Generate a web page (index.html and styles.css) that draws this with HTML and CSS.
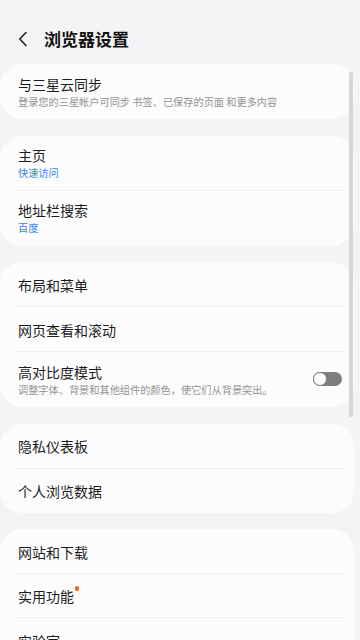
FILE: index.html
```html
<!DOCTYPE html>
<html lang="zh-CN">
<head>
<meta charset="utf-8">
<title>浏览器设置</title>
<link rel="stylesheet" href="styles.css">
</head>
<body>
<div class="screen">
  <header class="header">
    <svg class="back" width="12" height="16" viewBox="0 0 12 16"><path d="M9 1.5 L2.8 8 L9 14.5" fill="none" stroke="#222" stroke-width="1.6" stroke-linecap="round" stroke-linejoin="round"/></svg>
    <h1 class="title">浏览器设置</h1>
  </header>
  <main class="list">
    <section class="card">
      <div class="row two">
        <div class="label">与三星云同步</div>
        <div class="sub">登录您的三星帐户可同步 书签、已保存的页面 和更多内容</div>
      </div>
    </section>
    <section class="card">
      <div class="row two divided">
        <div class="label">主页</div>
        <div class="sub blue">快速访问</div>
      </div>
      <div class="row two">
        <div class="label">地址栏搜索</div>
        <div class="sub blue">百度</div>
      </div>
    </section>
    <section class="card">
      <div class="row one divided"><div class="label">布局和菜单</div></div>
      <div class="row one divided"><div class="label">网页查看和滚动</div></div>
      <div class="row two toggle-row">
        <div class="text">
          <div class="label">高对比度模式</div>
          <div class="sub">调整字体、背景和其他组件的颜色，使它们从背景突出。</div>
        </div>
        <div class="switch"><div class="knob"></div></div>
      </div>
    </section>
    <section class="card">
      <div class="row one divided"><div class="label">隐私仪表板</div></div>
      <div class="row one short"><div class="label">个人浏览数据</div></div>
    </section>
    <section class="card">
      <div class="row one divided"><div class="label">网站和下载</div></div>
      <div class="row one divided short"><div class="label">实用功能<span class="dot"></span></div></div>
      <div class="row one"><div class="label">实验室</div></div>
    </section>
  </main>
  <div class="scrollbar"></div>
</div>
</body>
</html>
```
FILE: styles.css
```css
* { box-sizing: border-box; }
html, body {
  margin: 0;
  padding: 0;
  width: 360px;
  height: 640px;
  overflow: hidden;
  background: #f4f4f6;
  font-family: "Noto Sans CJK SC", "Noto Sans", sans-serif;
  color: #1c1c1c;
}
.screen {
  position: relative;
  width: 360px;
  height: 640px;
  overflow: hidden;
}
.header {
  height: 64px;
  display: flex;
  align-items: flex-start;
  padding: 28px 0 0 17px;
}
.back {
  margin-top: 3px;
  flex: none;
}
.title {
  margin: 0 0 0 15px;
  font-size: 17px;
  line-height: 22px;
  font-weight: 700;
  color: #111;
}
.list {
  display: flex;
  flex-direction: column;
  gap: 16.5px;
}
.card {
  width: 354px;
  background: #fcfcfc;
  border-radius: 22px;
}
.row {
  position: relative;
  padding-left: 18px;
}
.row.one {
  height: 45px;
  display: flex;
  align-items: center;
}
.row.one.short { height: 44px; }
.row.two {
  height: 55px;
  padding-top: 10.5px;
}
.row.divided::after {
  content: "";
  position: absolute;
  left: 14px;
  right: 10px;
  bottom: 0;
  height: 1px;
  background: #efefef;
}
.label {
  position: relative;
  font-size: 14px;
  line-height: 18px;
  color: #1c1c1c;
}
.sub {
  margin-top: 1px;
  font-size: 10.2px;
  line-height: 15px;
  color: #939393;
  white-space: nowrap;
}
.sub.blue { color: #3a87df; }
.toggle-row {
  display: flex;
  justify-content: space-between;
  align-items: flex-start;
}
.switch {
  margin: 9.5px 12px 0 0;
  width: 29px;
  height: 14px;
  border-radius: 7px;
  background: #7e7e7e;
  flex: none;
}
.knob {
  width: 14px;
  height: 14px;
  border-radius: 50%;
  background: #fff;
  border: 1.6px solid #7e7e7e;
}
.dot {
  position: absolute;
  top: -1px;
  right: -5px;
  width: 4.5px;
  height: 4.5px;
  border-radius: 50%;
  background: #f0621e;
}
.scrollbar {
  position: absolute;
  left: 349px;
  top: 72px;
  width: 3.5px;
  height: 345px;
  border-radius: 2px;
  background: #d6d6d6;
}
```
